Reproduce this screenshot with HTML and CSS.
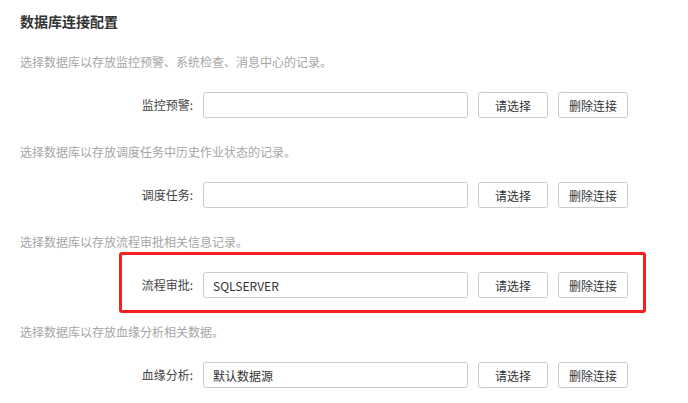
FILE: index.html
```html
<!DOCTYPE html>
<html lang="zh-CN">
<head>
  <meta charset="UTF-8">
  <meta name="viewport" content="width=device-width, initial-scale=1.0">
  <title>数据库连接配置</title>
  <link rel="stylesheet" href="styles.css">
</head>
<body>
  <h3 class="title">数据库连接配置</h3>

  <div class="section">
    <p class="desc">选择数据库以存放监控预警、系统检查、消息中心的记录。</p>
    <div class="row">
      <label class="row-label">监控预警:</label>
      <input class="row-input" type="text" value="" readonly>
      <button class="btn">请选择</button>
      <button class="btn">删除连接</button>
    </div>
  </div>

  <div class="section">
    <p class="desc">选择数据库以存放调度任务中历史作业状态的记录。</p>
    <div class="row">
      <label class="row-label">调度任务:</label>
      <input class="row-input" type="text" value="" readonly>
      <button class="btn">请选择</button>
      <button class="btn">删除连接</button>
    </div>
  </div>

  <div class="section">
    <p class="desc">选择数据库以存放流程审批相关信息记录。</p>
    <div class="row marked">
      <label class="row-label">流程审批:</label>
      <input class="row-input" type="text" value="SQLSERVER" readonly>
      <button class="btn">请选择</button>
      <button class="btn">删除连接</button>
    </div>
  </div>

  <div class="section">
    <p class="desc">选择数据库以存放血缘分析相关数据。</p>
    <div class="row">
      <label class="row-label">血缘分析:</label>
      <input class="row-input" type="text" value="默认数据源" readonly>
      <button class="btn">请选择</button>
      <button class="btn">删除连接</button>
    </div>
  </div>
</body>
</html>
```

FILE: styles.css
```css
body {
  margin: 0;
  padding: 11px 20px;
  background: #fff;
  color: #333;
  font-family: "Microsoft YaHei", "Noto Sans CJK SC", sans-serif;
  font-size: 12px;
}
.title {
  margin: 0 0 21px;
  font-size: 14px;
  line-height: 20px;
  font-weight: bold;
  color: #333;
}
.section {
  margin-bottom: 24px;
}
.desc {
  margin: 0 0 20px;
  line-height: 20px;
  color: #a6a6a6;
}
.row {
  position: relative;
  display: flex;
  align-items: center;
  gap: 10px;
  height: 26px;
}
.row-label {
  width: 173px;
  text-align: right;
  line-height: 26px;
  color: #444;
}
.row-input {
  box-sizing: border-box;
  width: 265px;
  height: 26px;
  margin: 0;
  padding: 0 9px;
  border: 1px solid #ccc;
  border-radius: 3px;
  font: inherit;
  color: #333;
  outline: none;
}
.btn {
  box-sizing: border-box;
  width: 70px;
  height: 26px;
  margin: 0;
  padding: 0;
  background: #fff;
  border: 1px solid #ccc;
  border-radius: 3px;
  font: inherit;
  color: #333;
  cursor: pointer;
}
/* annotation box around the highlighted row */
.marked::after {
  content: "";
  position: absolute;
  left: 99px;
  top: -20px;
  width: 527px;
  height: 61px;
  box-sizing: border-box;
  border: 3px solid #f51f1f;
  border-radius: 3px;
  pointer-events: none;
}
```
